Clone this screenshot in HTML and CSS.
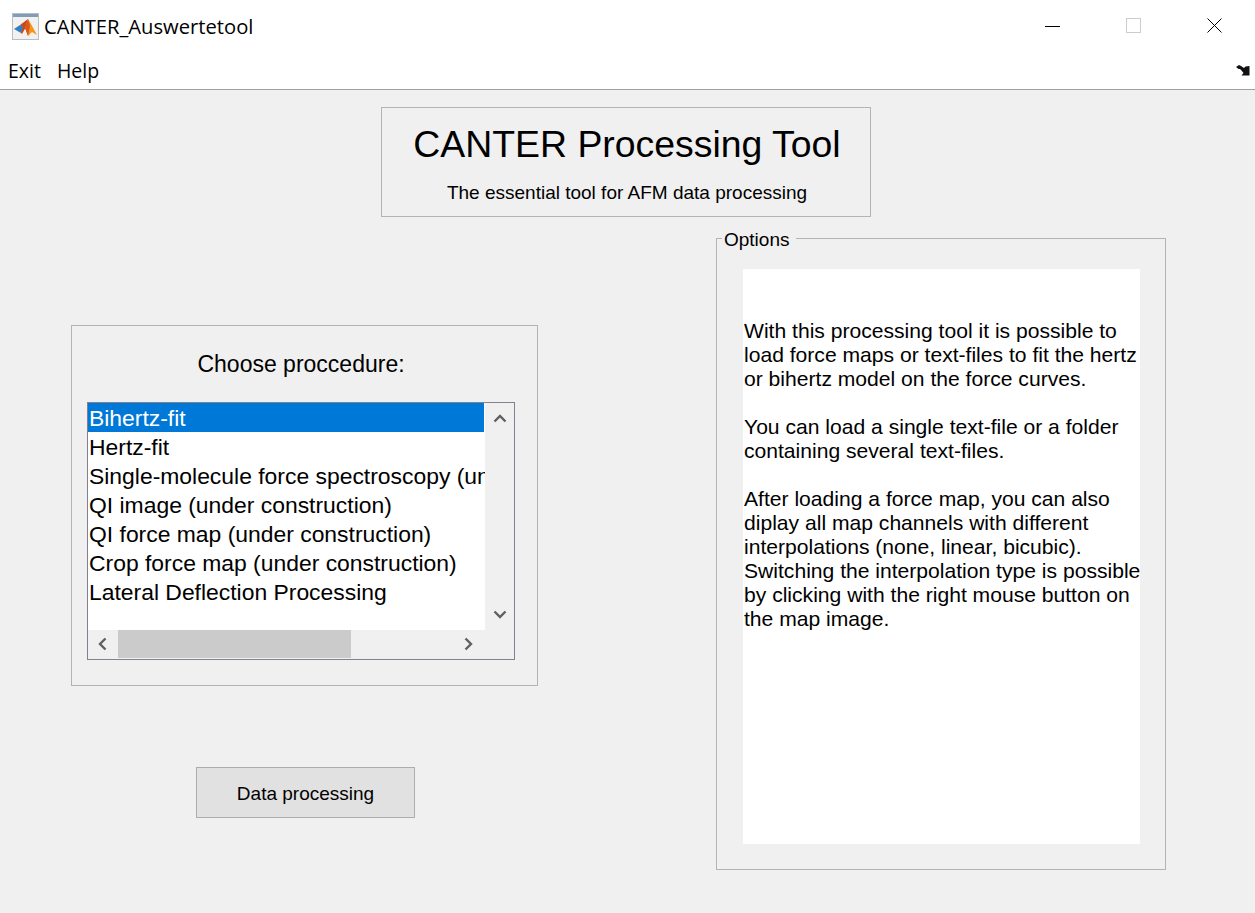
FILE: index.html
```html
<!DOCTYPE html>
<html lang="en">
<head>
  <meta charset="UTF-8">
  <title>CANTER_Auswertetool</title>
  <link rel="stylesheet" href="styles.css">
</head>
<body>
  <header class="titlebar">
    <svg class="app-icon" width="27" height="27" viewBox="0 0 27 27">
      <rect x="0.5" y="0.5" width="26" height="26" fill="#f1f1f1" stroke="#bdbdbd"/>
      <rect x="1" y="1" width="25" height="3" fill="#7f9cb8"/>
      <path d="M2 16 L8 12 L12 14 L9 20 Z" fill="#2f7fc4"/>
      <path d="M8 12 L12 9 L16 6 L14 14 L10 21 L9 20 L11 14 Z" fill="#c9481c"/>
      <path d="M16 6 L19 11 L25 22 L20 19 L16 23 L13 15 Z" fill="#f3951f"/>
      <path d="M16 6 L18 13 L16 23 L13 15 Z" fill="#d8581a"/>
    </svg>
    <span class="app-name">CANTER_Auswertetool</span>
    <div class="window-buttons">
      <svg width="16" height="16" viewBox="0 0 16 16"><path d="M0 8.5H15" stroke="#000"/></svg>
      <svg width="16" height="16" viewBox="0 0 16 16"><rect x="0.5" y="0.5" width="14" height="14" fill="none" stroke="#ccc"/></svg>
      <svg width="16" height="16" viewBox="0 0 16 16"><path d="M0.5 0.5L14.5 14.5M14.5 0.5L0.5 14.5" stroke="#000"/></svg>
    </div>
  </header>

  <nav class="menubar">
    <span>Exit</span>
    <span>Help</span>
    <svg class="dock-icon" width="14" height="11" viewBox="0 0 14 11">
      <path d="M0 2L3 0L5 1L8 3L9.5 1.5L13.5 1L13.5 10.5L5.5 10.5L7.5 8L5.5 5.5L4 4L2.5 4Z" fill="#111"/>
    </svg>
  </nav>

  <main class="content">
    <div class="banner">
      <h1>CANTER Processing Tool</h1>
      <p>The essential tool for AFM data processing</p>
    </div>

    <div class="columns">
      <div class="left-col">
        <section class="choose-panel">
          <h2>Choose proccedure:</h2>
          <div class="listbox">
            <ul class="list-items">
              <li class="selected">Bihertz-fit</li>
              <li>Hertz-fit</li>
              <li>Single-molecule force spectroscopy (under construction)</li>
              <li>QI image (under construction)</li>
              <li>QI force map (under construction)</li>
              <li>Crop force map (under construction)</li>
              <li>Lateral Deflection Processing</li>
            </ul>
            <div class="vscroll">
              <svg width="14" height="9" viewBox="0 0 14 9"><path d="M1.5 7.5L7 2L12.5 7.5" fill="none" stroke="#606060" stroke-width="2.4"/></svg>
              <svg width="14" height="9" viewBox="0 0 14 9"><path d="M1.5 1.5L7 7L12.5 1.5" fill="none" stroke="#606060" stroke-width="2.4"/></svg>
            </div>
            <div class="hscroll">
              <svg width="9" height="14" viewBox="0 0 9 14"><path d="M7.5 1.5L2 7L7.5 12.5" fill="none" stroke="#606060" stroke-width="2.4"/></svg>
              <div class="hscroll-track"><div class="hscroll-thumb"></div></div>
              <svg width="9" height="14" viewBox="0 0 9 14"><path d="M1.5 1.5L7 7L1.5 12.5" fill="none" stroke="#606060" stroke-width="2.4"/></svg>
            </div>
          </div>
        </section>
        <button class="process-btn">Data processing</button>
      </div>

      <fieldset class="options">
        <legend>Options</legend>
        <div class="options-text">
          <p>With this processing tool it is possible to<br>load force maps or text-files to fit the hertz<br>or bihertz model on the force curves.</p>
          <p>You can load a single text-file or a folder<br>containing several text-files.</p>
          <p>After loading a force map, you can also<br>diplay all map channels with different<br>interpolations (none, linear, bicubic).<br>Switching the interpolation type is possible<br>by clicking with the right mouse button on<br>the map image.</p>
        </div>
      </fieldset>
    </div>
  </main>
</body>
</html>
```

FILE: styles.css
```css
* {
  box-sizing: border-box;
}

html, body {
  height: 100%;
}

body {
  margin: 0;
  background: #f0f0f0;
  color: #000;
  font-family: "Liberation Sans", Arial, sans-serif;
  overflow: hidden;
}

/* window chrome */
.titlebar {
  height: 52px;
  background: #fff;
  display: flex;
  align-items: center;
  padding-left: 12px;
}

.app-icon {
  margin-right: 5px;
}

.app-name {
  font-family: "Open Sans", sans-serif;
  font-size: 20.2px;
}

.window-buttons {
  margin-left: auto;
  display: flex;
  gap: 65px;
  padding-right: 32px;
}

.menubar {
  height: 38px;
  background: #fff;
  border-bottom: 1px solid #a0a0a0;
  display: flex;
  align-items: center;
  gap: 16px;
  padding: 0 5px 0 8px;
  font-family: "Open Sans", sans-serif;
  font-size: 19.5px;
}

.dock-icon {
  margin-left: auto;
}

/* content */
.content {
  padding-top: 17px;
}

.banner {
  width: 490px;
  height: 110px;
  margin-left: 381px;
  border: 1px solid #b4b4b4;
  padding-left: 2px;
  text-align: center;
}

.banner h1 {
  margin: 15px 0 0;
  font-size: 37.4px;
  font-weight: 400;
  line-height: 42px;
}

.banner p {
  margin: 17px 0 0;
  font-size: 19px;
  line-height: 22px;
}

.columns {
  display: flex;
  align-items: flex-start;
  padding-left: 71px;
}

.left-col {
  width: 467px;
  margin-top: 108px;
}

.choose-panel {
  height: 361px;
  border: 1px solid #b4b4b4;
  padding: 24px 22px 0 15px;
}

.choose-panel h2 {
  margin: 0 0 24px;
  font-size: 23px;
  font-weight: 400;
  line-height: 28px;
  text-align: center;
}

.listbox {
  width: 428px;
  height: 258px;
  border: 1px solid #82828c;
  display: grid;
  grid-template-columns: 397px 29px;
  grid-template-rows: 227px 28px;
}

.list-items {
  margin: 0;
  padding: 0;
  list-style: none;
  background: #fff;
  overflow: hidden;
  font-size: 22.9px;
  line-height: 28px;
  white-space: nowrap;
}

.list-items li {
  padding: 1px 0 0 1px;
}

.list-items .selected {
  background: #0078d7;
  color: #fff;
  margin-right: 1px;
}

.vscroll {
  display: flex;
  flex-direction: column;
  justify-content: space-between;
  align-items: center;
  padding: 11px 0 11px;
}

.hscroll {
  grid-column: 1 / 3;
  display: flex;
  align-items: center;
  padding: 0 41px 0 10px;
}

.hscroll-track {
  flex: 1;
  height: 28px;
  margin: 0 11px;
}

.hscroll-thumb {
  width: 233px;
  height: 100%;
  background: #cbcbcb;
}

.process-btn {
  display: block;
  width: 219px;
  height: 51px;
  margin: 81px 0 0 125px;
  background: #e1e1e1;
  border: 1px solid #adadad;
  font-family: inherit;
  font-size: 19px;
  color: #000;
  padding: 2px 0 0;
}

.options {
  width: 450px;
  height: 645px;
  margin: 8px 0 0 178px;
  padding: 0 25px 25px 26px;
  border: 1px solid #b4b4b4;
  min-width: 0;
}

.options legend {
  margin-left: -21px;
  padding: 4px 7px 0 2px;
  font-size: 19px;
  line-height: 22px;
}

.options-text {
  height: 575px;
  margin-top: 18px;
  padding: 50px 0 0 1px;
  background: #fff;
  font-size: 21.1px;
  line-height: 24px;
  white-space: nowrap;
}

.options-text p {
  margin: 0 0 24px;
}
```
